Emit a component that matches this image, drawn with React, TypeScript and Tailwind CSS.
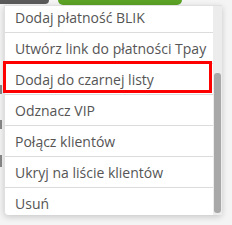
import React from "react";

const items = [
  "Dodaj płatność BLIK",
  "Utwórz link do płatności Tpay",
  "Dodaj do czarnej listy",
  "Odznacz VIP",
  "Połącz klientów",
  "Ukryj na liście klientów",
  "Usuń",
];

export default function App() {
  return (
    <div
      className="relative w-[232px] h-[225px] overflow-hidden bg-[#f4f4f4]"
      style={{ fontFamily: '"Open Sans", "Noto Sans", sans-serif' }}
    >
      {/* top buttons */}
      <div className="flex gap-[9px]">
        <div className="w-[49px] h-[4px] rounded-br-[4px] bg-[#5b5b5b]" />
        <div className="w-[124px] h-[5px] rounded-b-[5px] bg-[#5ba226]" />
      </div>
      {/* background table fragments */}
      <div className="flex flex-col pt-[80px] gap-[26px]">
        <div className="w-[2px] h-[9px] bg-[#888]" />
        <div className="w-[2px] h-[9px] bg-[#888]" />
        <div className="w-[2px] h-[12px] bg-[#888]" />
      </div>

      {/* dropdown menu */}
      <div className="absolute left-[4px] top-[5px] w-[218px] h-[210px] flex bg-white rounded-b-[4px] shadow-[0_2px_6px_rgba(0,0,0,0.18)] border-t border-l border-[#e0e0e0]">
        <div className="flex-1 overflow-hidden">
          <div className="-mt-[4px] flex flex-col">
            {items.map((t, i) => (
              <div
                key={t}
                className={`h-[31px] flex items-center pl-[10px] text-[14px] text-[#555] whitespace-nowrap ${
                  i < items.length - 1 ? "border-b border-[#dcdcdc]" : ""
                }`}
              >
                {t}
              </div>
            ))}
          </div>
        </div>
        <div className="w-[9px] bg-[#ececec] flex flex-col pt-[67px] pb-[2px]">
          <div className="ml-[1px] w-[7px] flex-1 rounded-[3px] bg-[#a8a8a8]" />
        </div>
      </div>

      {/* red highlight box */}
      <div className="absolute left-[3px] top-[61px] w-[209px] h-[32px] border-[3px] border-[#ff0000]" />
    </div>
  );
}
